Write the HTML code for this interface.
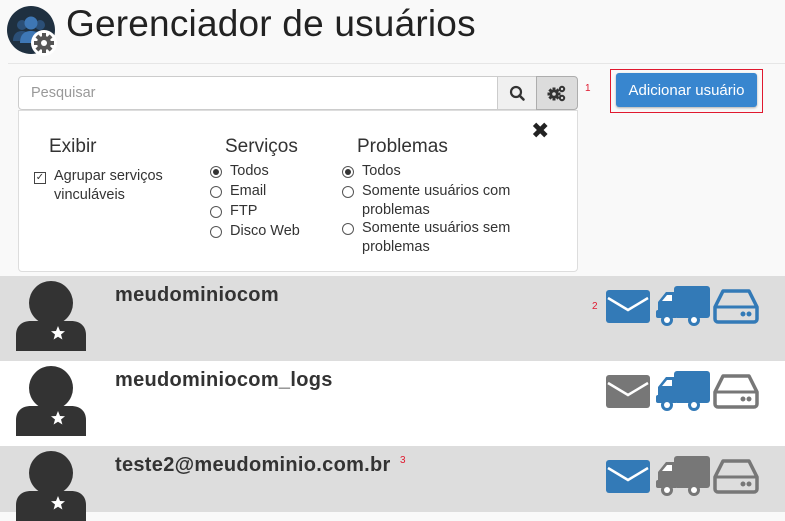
<!DOCTYPE html>
<html><head><meta charset="utf-8"><style>
*{box-sizing:border-box;margin:0;padding:0}
body{width:785px;height:512px;overflow:hidden;background:#f9f9f9;font-family:"Liberation Sans","DejaVu Sans",sans-serif;color:#333;position:relative}
.abs{position:absolute}
h1{position:absolute;left:66px;top:3px;font-weight:normal;font-size:37px;color:#222;letter-spacing:0.2px}
.hr{position:absolute;left:8px;right:0;top:63px;height:1px;background:#e6e6e6}
.inp{left:18px;top:76px;width:480px;height:34px;border:1px solid #ccc;border-radius:4px 0 0 4px;background:#fff;font-size:14.5px;color:#999;padding:8px 12px}
.b1{left:497px;top:76px;width:40px;height:34px;border:1px solid #ccc;background:#f0f0f0}
.b2{left:536px;top:76px;width:42px;height:34px;border:1px solid #adadad;background:#dcdcdc;border-radius:0 4px 4px 0}
.red{color:#e0192f;font-size:10px}
.panel{left:18px;top:110px;width:560px;height:162px;background:#fff;border:1px solid #ddd;border-radius:0 0 4px 4px}
.hd{font-size:19px;color:#333}
.t{font-size:14.5px;color:#333;line-height:19px}
.rad{width:12px;height:12px;border:1px solid #555;border-radius:50%;display:inline-block}
.rad.on::after{content:"";display:block;width:6px;height:6px;margin:2px;background:#333;border-radius:50%}
.row{left:0;width:785px;height:85px}
.name{font-weight:bold;font-size:20px;color:#333;letter-spacing:0.3px}
</style></head><body>
<svg class="abs" style="left:7px;top:5px" width="52" height="52" viewBox="0 0 52 52">
<circle cx="24" cy="25" r="24" fill="#1f3040"/>
<circle cx="15" cy="20" r="5" fill="#2b4f77"/><circle cx="33" cy="20" r="5" fill="#2b4f77"/>
<path d="M6 36c0-8 5-10 9-10s9 2 9 10z" fill="#2b4f77"/><path d="M24 36c0-8 5-10 9-10s9 2 9 10z" fill="#2b4f77"/>
<circle cx="24" cy="18" r="6.5" fill="#3e77b5"/><path d="M13 38c0-10 6-12 11-12s11 2 11 12z" fill="#3e77b5"/>
<circle cx="37" cy="38" r="13" fill="#fff"/>
<g transform="translate(37 38)" fill="#555"><circle r="7"/>
<rect x="-2" y="-10" width="4" height="20"/><rect x="-10" y="-2" width="20" height="4"/>
<rect x="-2" y="-10" width="4" height="20" transform="rotate(45)"/><rect x="-2" y="-10" width="4" height="20" transform="rotate(-45)"/>
<circle r="3" fill="#fff"/></g></svg>
<h1>Gerenciador de usuários</h1>
<div class="hr"></div>
<div class="abs inp">Pesquisar</div>
<div class="abs b1"><svg width="38" height="32" viewBox="0 0 38 32"><circle cx="18" cy="15" r="5" fill="none" stroke="#333" stroke-width="2.2"/><path d="M21.5 18.5l4 4" stroke="#333" stroke-width="2.6" stroke-linecap="round"/></svg></div>
<div class="abs b2"><svg width="40" height="32" viewBox="0 0 40 32">
<g fill="#333" transform="translate(17 17)"><circle r="4.5"/><rect x="-1.5" y="-6.5" width="3" height="13"/><rect x="-6.5" y="-1.5" width="13" height="3"/><rect x="-1.5" y="-6.5" width="3" height="13" transform="rotate(45)"/><rect x="-1.5" y="-6.5" width="3" height="13" transform="rotate(-45)"/></g>
<circle cx="17" cy="17" r="1.8" fill="#dcdcdc"/>
<g fill="none" stroke="#333" stroke-width="2"><circle cx="25" cy="12" r="2.2"/><circle cx="25" cy="21" r="2.2"/></g></svg></div>
<div class="abs red" style="left:585px;top:83px">1</div>
<div class="abs" style="left:610px;top:69px;width:153px;height:44px;border:1px solid #e0192f"></div>
<div class="abs" style="left:616px;top:73px;width:141px;height:34px;background:#3886cf;border-radius:3px;color:#fff;font-size:15px;text-align:center;line-height:36px;box-shadow:0 1px 2px rgba(0,0,0,.3)">Adicionar usuário</div>
<div class="abs panel"></div>
<div class="abs" style="left:531px;top:118px;font-size:22px;font-weight:bold;color:#222">✖</div>
<div class="abs hd" style="left:49px;top:136px">Exibir</div>
<div class="abs" style="left:34px;top:172px;width:12px;height:12px;border:1px solid #444;font-size:10px;line-height:10px;text-align:center">✓</div>
<div class="abs t" style="left:54px;top:167px">Agrupar serviços<br>vinculáveis</div>
<div class="abs hd" style="left:225px;top:136px">Serviços</div>
<div class="abs rad on" style="left:210px;top:166px"></div><div class="abs t" style="left:230px;top:162px">Todos</div>
<div class="abs rad" style="left:210px;top:186px"></div><div class="abs t" style="left:230px;top:182px">Email</div>
<div class="abs rad" style="left:210px;top:206px"></div><div class="abs t" style="left:230px;top:202px">FTP</div>
<div class="abs rad" style="left:210px;top:226px"></div><div class="abs t" style="left:230px;top:222px">Disco Web</div>
<div class="abs hd" style="left:357px;top:136px">Problemas</div>
<div class="abs rad on" style="left:342px;top:166px"></div><div class="abs t" style="left:362px;top:162px">Todos</div>
<div class="abs rad" style="left:342px;top:186px"></div><div class="abs t" style="left:362px;top:182px">Somente usuários com<br>problemas</div>
<div class="abs rad" style="left:342px;top:223px"></div><div class="abs t" style="left:362px;top:219px">Somente usuários sem<br>problemas</div>

<div class="abs row" style="top:276px;background:#dddddd"></div>
<div class="abs row" style="top:361px;background:#fff"></div>
<div class="abs row" style="top:446px;background:#dddddd;height:66px"></div>

<svg width="0" height="0" style="position:absolute"><defs>
<g id="av"><circle cx="35" cy="22" r="22" fill="#333"/><path d="M0 70v-16c0-9 6-14 15-14h40c9 0 15 5 15 14v16z" fill="#333"/><path d="M42 45l2 5 5 .3-4 3.2 1.4 5-4.4-2.8-4.4 2.8 1.4-5-4-3.2 5-.3z" fill="#fff"/></g>
<g id="env"><rect x="0" y="0" width="44" height="33" rx="3"/><path d="M2 8l20 12 20-12" fill="none" stroke="#fff" stroke-width="2.5"/></g>
<g id="trk"><rect x="18" y="0" width="36" height="32" rx="3"/><path d="M2 16l8-10h10v26h-18z"/><rect x="0" y="24" width="20" height="8" rx="2"/><circle cx="11" cy="34" r="6"/><circle cx="11" cy="34" r="3" fill="#fff"/><circle cx="38" cy="34" r="6"/><circle cx="38" cy="34" r="3" fill="#fff"/><path d="M6 15l5-6h5v6z" fill="#fff"/></g>
<g id="dsk"><path d="M2 18l8-16h26l8 16v12a3 3 0 0 1-3 3h-36a3 3 0 0 1-3-3z" fill="none" stroke-width="3.5" stroke-linejoin="round"/><path d="M2 18h42" stroke-width="3"/><circle cx="30" cy="25" r="2"/><circle cx="36" cy="25" r="2"/></g>
</defs></svg>

<svg class="abs" style="left:16px;top:281px" width="70" height="70"><use href="#av"/></svg>
<div class="abs name" style="left:115px;top:284px">meudominiocom</div>
<div class="abs red" style="left:592px;top:301px">2</div>
<svg class="abs" style="left:606px;top:286px" width="160" height="44">
<use href="#env" y="4" fill="#337ab7"/><g transform="translate(50,0)" fill="#337ab7"><use href="#trk"/></g><g transform="translate(107,3)" fill="#337ab7" stroke="#337ab7"><use href="#dsk"/></g></svg>

<svg class="abs" style="left:16px;top:366px" width="70" height="70"><use href="#av"/></svg>
<div class="abs name" style="left:115px;top:369px">meudominiocom_logs</div>
<svg class="abs" style="left:606px;top:371px" width="160" height="44">
<use href="#env" y="4" fill="#777"/><g transform="translate(50,0)" fill="#337ab7"><use href="#trk"/></g><g transform="translate(107,3)" fill="#777" stroke="#777"><use href="#dsk"/></g></svg>

<svg class="abs" style="left:16px;top:451px" width="70" height="70"><use href="#av"/></svg>
<div class="abs name" style="left:115px;top:454px">teste2@meudominio.com.br</div>
<div class="abs red" style="left:400px;top:455px">3</div>
<svg class="abs" style="left:606px;top:456px" width="160" height="44">
<use href="#env" y="4" fill="#337ab7"/><g transform="translate(50,0)" fill="#777"><use href="#trk"/></g><g transform="translate(107,3)" fill="#777" stroke="#777"><use href="#dsk"/></g></svg>
</body></html>
